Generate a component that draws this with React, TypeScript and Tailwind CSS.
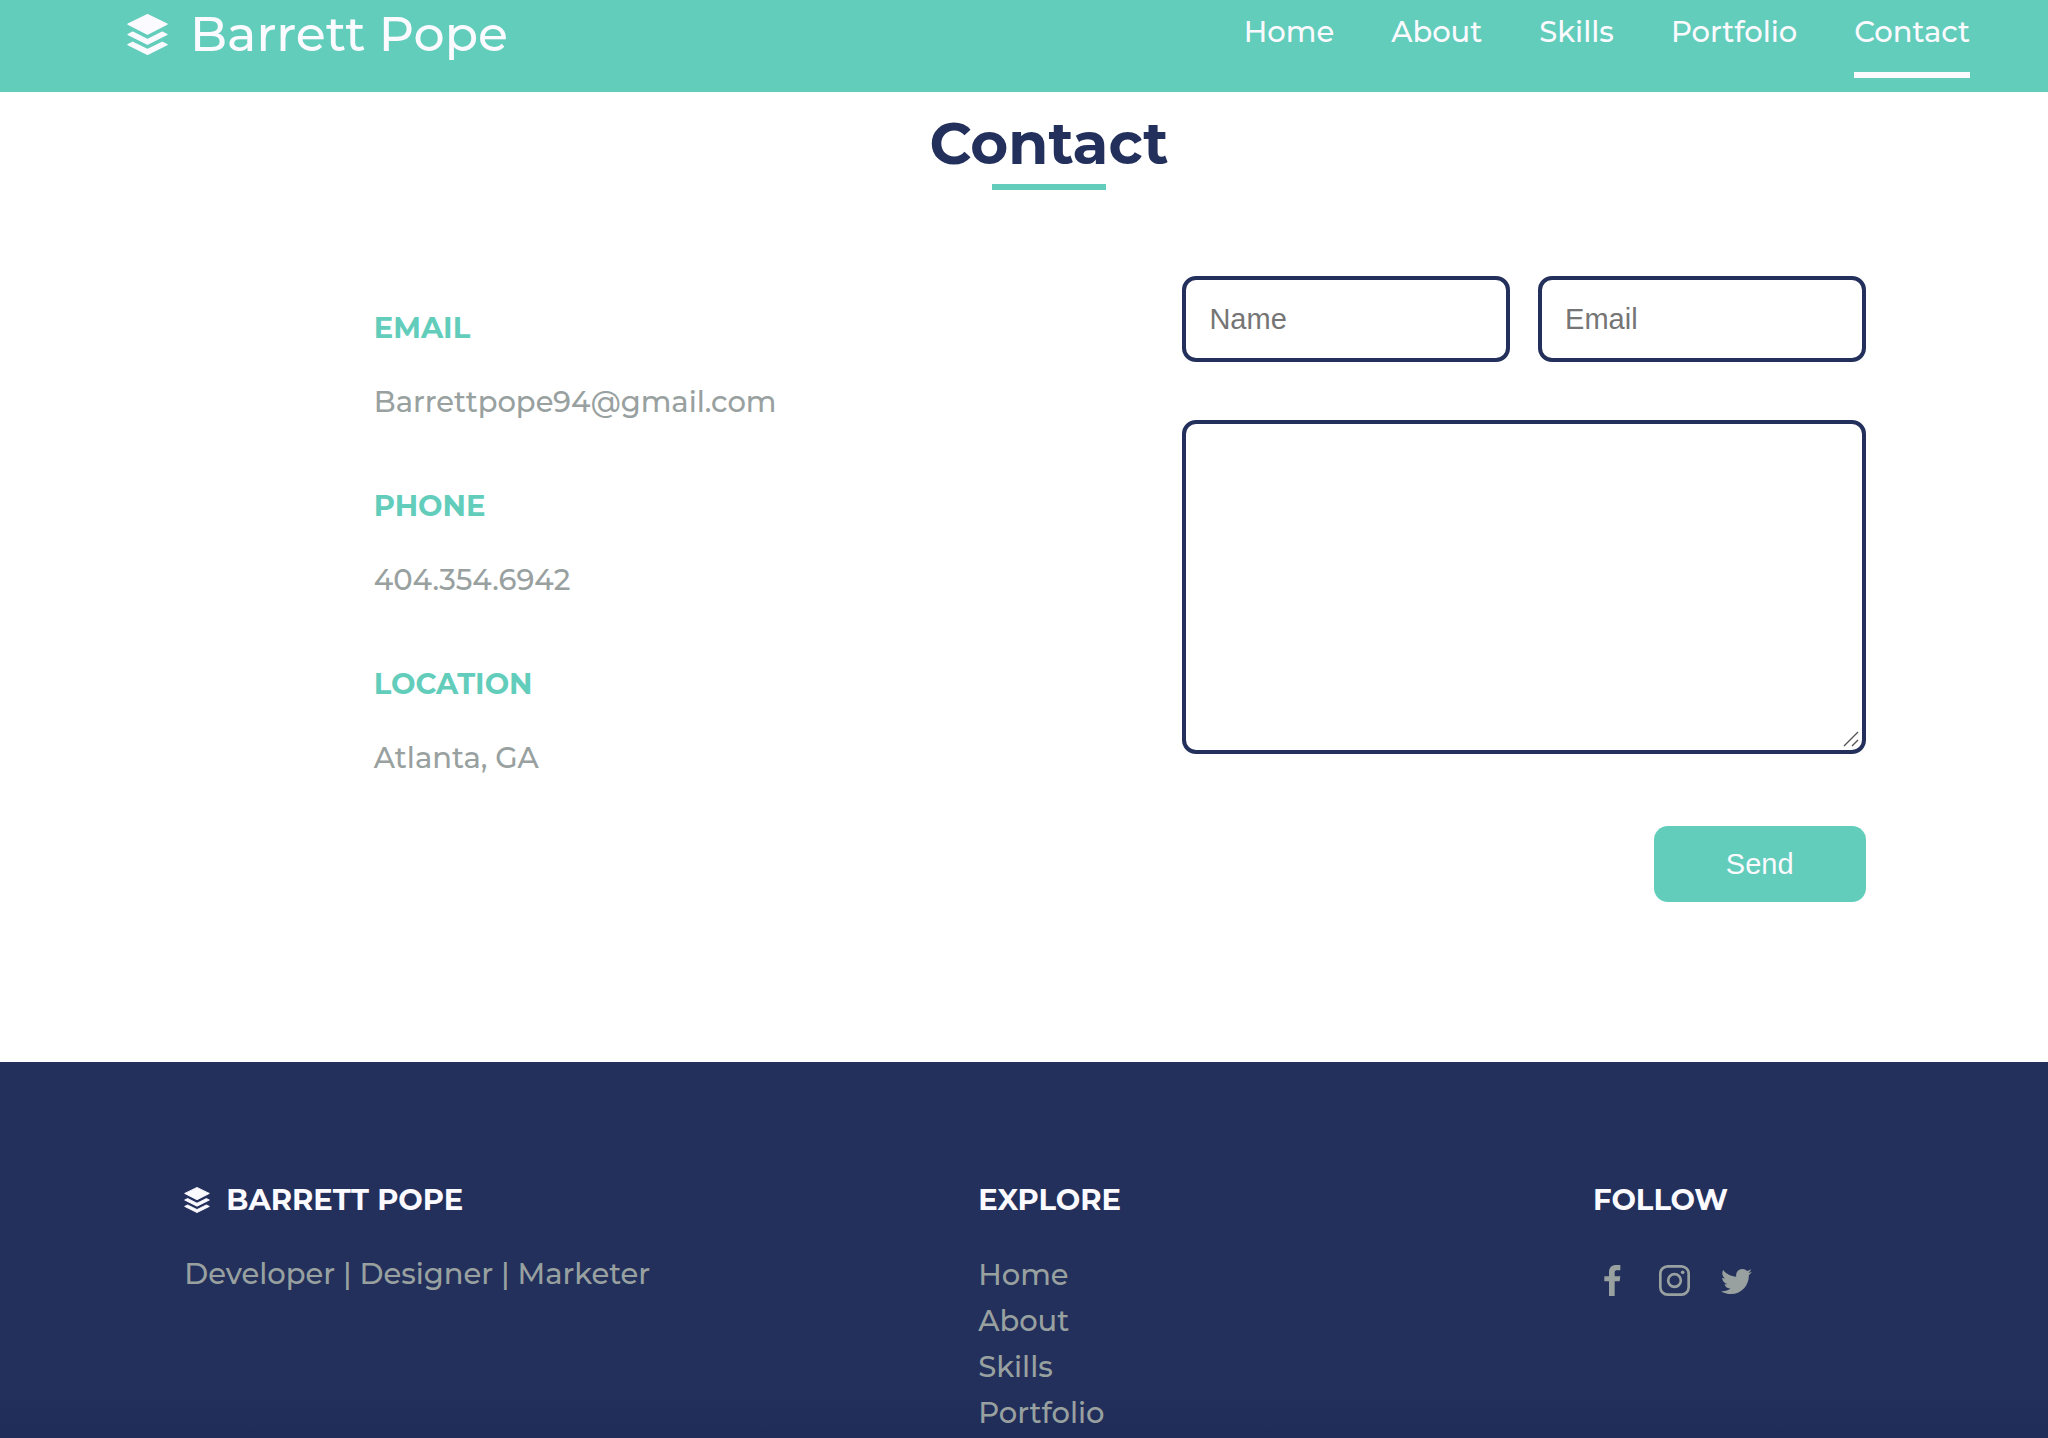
import { ImTwitter } from "react-icons/im";

type IconProps = { className?: string };

const navItems = ["Home", "About", "Skills", "Portfolio", "Contact"];
const exploreItems = ["Home", "About", "Skills", "Portfolio"];

const contactDetails = [
  { label: "EMAIL", value: "Barrettpope94@gmail.com" },
  { label: "PHONE", value: "404.354.6942" },
  { label: "LOCATION", value: "Atlanta, GA" },
];

function LayersLogo({ className }: IconProps) {
  return (
    <svg
      viewBox="0 0 122 122"
      aria-hidden="true"
      className={className}
      fill="currentColor"
      stroke="currentColor"
      strokeWidth="4"
      strokeLinejoin="round"
    >
      <path d="M61 2 119 30 61 60 3 30Z" />
      <path d="M17 54 61 76 105 54 119 61 61 90 3 61Z" />
      <path d="M17 84 61 106 105 84 119 91 61 120 3 91Z" />
    </svg>
  );
}

function FacebookIcon({ className }: IconProps) {
  return (
    <svg viewBox="-22 0 93 93" aria-hidden="true" className={className} fill="currentColor">
      <path d="M48 0V16H38C33 16 31 18 31 23V34H48L46 49H31V93H14V49H0V34H14V22C14 7 22 0 36 0Z" />
    </svg>
  );
}

function InstagramIcon({ className }: IconProps) {
  return (
    <svg viewBox="0 0 93 93" aria-hidden="true" className={className} fill="none" stroke="currentColor" strokeWidth="8">
      <rect x="4" y="4" width="85" height="85" rx="22" />
      <circle cx="46.500" cy="46.500" r="19" />
      <circle cx="71" cy="22" r="5.500" fill="currentColor" stroke="none" />
    </svg>
  );
}

const socials = [
  { name: "Facebook", Icon: FacebookIcon },
  { name: "Instagram", Icon: InstagramIcon },
  { name: "Twitter", Icon: ImTwitter },
];

function Header() {
  return (
    <header className="flex h-[92px] items-start justify-between bg-[#62cdbb] pr-[78px] pl-[127px] text-[#fbfaff]">
      <a href="#home" className="flex items-center gap-[22px] pt-1 text-[49px] leading-[60px] font-medium">
        <LayersLogo className="size-[41px]" />
        Barrett Pope
      </a>
      <nav className="flex gap-[57px]">
        {navItems.map((item) => (
          <a
            key={item}
            href={`#${item.toLowerCase()}`}
            className={
              item === "Contact"
                ? "h-[78px] border-b-6 border-[#fbfaff] pt-[9px]"
                : "h-[78px] pt-[9px]"
            }
          >
            {item}
          </a>
        ))}
      </nav>
    </header>
  );
}

function ContactForm() {
  const field =
    "h-[86px] w-full min-w-0 rounded-[14px] border-4 border-[#23305b] bg-white px-[23px] font-['Liberation_Sans',Arial,sans-serif] text-[29px] font-normal placeholder:text-[#757575] outline-none";
  return (
    <form className="flex w-[45.8%] flex-col" onSubmit={(e) => e.preventDefault()}>
      <div className="grid grid-cols-2 gap-7">
        <input type="text" name="name" aria-label="Name" placeholder="Name" className={field} />
        <input type="email" name="email" aria-label="Email" placeholder="Email" className={field} />
      </div>
      <div className="relative mt-[58px] h-[334px]">
        <textarea
          name="message"
          aria-label="Message"
          className="block h-full w-full resize-none rounded-[14px] border-4 border-[#23305b] bg-white p-6 font-['Liberation_Sans',Arial,sans-serif] text-[29px] font-normal outline-none"
        />
        <svg
          viewBox="0 0 16 16"
          aria-hidden="true"
          className="pointer-events-none absolute right-[7px] bottom-[7px] size-4 fill-none stroke-[#555] stroke-[1.4]"
        >
          <path d="M1 15 15 1M9 15l6-6" />
        </svg>
      </div>
      <button
        type="submit"
        className="mt-[72px] h-[76px] w-[212px] self-end rounded-[14px] bg-[#62cdbb] font-['Liberation_Sans',Arial,sans-serif] text-[29px] font-normal text-[#fbfaff]"
      >
        Send
      </button>
    </form>
  );
}

function Footer() {
  const heading = "flex items-center gap-4 font-bold text-[#fbfaff]";
  return (
    <footer className="grid flex-1 grid-cols-[794fr_615fr_455fr] items-start bg-[linear-gradient(to_top,#202c58,#23305b_44px)] pt-[115px] pl-[9%] text-[#98a1a0]">
      <section>
        <h2 className={heading}>
          <LayersLogo className="size-[26px]" />
          BARRETT POPE
        </h2>
        <p className="mt-7">Developer | Designer | Marketer</p>
      </section>
      <section>
        <h2 className={heading}>EXPLORE</h2>
        <ul className="mt-[29px]">
          {exploreItems.map((item) => (
            <li key={item}>
              <a href={`#${item.toLowerCase()}`}>{item}</a>
            </li>
          ))}
        </ul>
      </section>
      <section>
        <h2 className={heading}>FOLLOW</h2>
        <div className="mt-[42px] flex gap-[31px] pl-1">
          {socials.map(({ name, Icon }) => (
            <a key={name} href={`#${name.toLowerCase()}`} aria-label={name}>
              <Icon className="size-[31px]" />
            </a>
          ))}
        </div>
      </section>
    </footer>
  );
}

export default function App() {
  return (
    <div className="flex min-h-screen flex-col bg-white font-[Montserrat,Inter,sans-serif] text-[29px] leading-[46px] font-medium">
      <Header />
      <main className="pb-40">
        <div className="flex flex-col items-center pt-[17px] pl-[50px]">
          <h1 className="text-[58px] leading-[70px] font-bold text-[#23305b]">Contact</h1>
          <div className="mt-[5px] h-1.5 w-[114px] bg-[#62cdbb]" />
        </div>
        <div className="mt-[86px] flex items-start justify-between pr-[8.9%] pl-[18.25%]">
          <dl className="flex flex-col gap-[58px] pt-[29px]">
            {contactDetails.map(({ label, value }) => (
              <div key={label}>
                <dt className="font-bold text-[#62cdbb]">{label}</dt>
                <dd className="mt-7 text-[#98a1a0]">{value}</dd>
              </div>
            ))}
          </dl>
          <ContactForm />
        </div>
      </main>
      <Footer />
    </div>
  );
}
